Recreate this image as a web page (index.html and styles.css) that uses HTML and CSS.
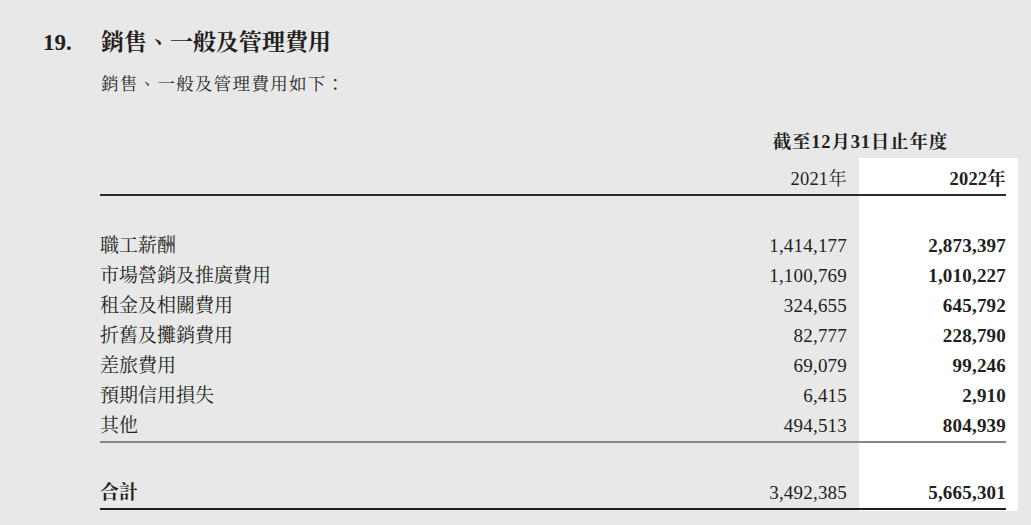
FILE: index.html
```html
<!DOCTYPE html>
<html lang="zh-Hant">
<head>
<meta charset="utf-8">
<link rel="stylesheet" href="styles.css">
</head>
<body>
<div class="page">
  <h1 class="heading"><span class="num">19.</span><span class="title">銷售、一般及管理費用</span></h1>
  <p class="intro">銷售、一般及管理費用如下：</p>
  <div class="period">截至12月31日止年度</div>
  <div class="table">
    <div class="col labels">
      <div class="cell head"></div>
      <div class="spacer"></div>
      <div class="cell">職工薪酬</div>
      <div class="cell">市場營銷及推廣費用</div>
      <div class="cell">租金及相關費用</div>
      <div class="cell">折舊及攤銷費用</div>
      <div class="cell">差旅費用</div>
      <div class="cell">預期信用損失</div>
      <div class="cell last">其他</div>
      <div class="spacer"></div>
      <div class="cell total">合計</div>
    </div>
    <div class="col y2021">
      <div class="cell head">2021年</div>
      <div class="spacer"></div>
      <div class="cell">1,414,177</div>
      <div class="cell">1,100,769</div>
      <div class="cell">324,655</div>
      <div class="cell">82,777</div>
      <div class="cell">69,079</div>
      <div class="cell">6,415</div>
      <div class="cell last">494,513</div>
      <div class="spacer"></div>
      <div class="cell total">3,492,385</div>
    </div>
    <div class="col y2022">
      <div class="cell head">2022年</div>
      <div class="spacer"></div>
      <div class="cell">2,873,397</div>
      <div class="cell">1,010,227</div>
      <div class="cell">645,792</div>
      <div class="cell">228,790</div>
      <div class="cell">99,246</div>
      <div class="cell">2,910</div>
      <div class="cell last">804,939</div>
      <div class="spacer"></div>
      <div class="cell total">5,665,301</div>
    </div>
  </div>
</div>
</body>
</html>
```
FILE: styles.css
```css
* { box-sizing: border-box; }
html, body {
  margin: 0;
  padding: 0;
  background: #e7e8e7;
}
body {
  font-family: "Liberation Serif", "Noto Serif CJK TC", "Noto Sans CJK TC", serif;
  color: #231f20;
  width: 1031px;
  height: 525px;
  overflow: hidden;
}
.page {
  padding: 28px 13px 0 43px;
}
.heading {
  display: flex;
  margin: 0;
  font-size: 23px;
  line-height: 30px;
  font-weight: bold;
  height: 30px;
}
.heading .num {
  width: 58px;
  flex: none;
}
.intro {
  margin: 13px 0 0 58px;
  font-size: 17.5px;
  line-height: 26px;
  letter-spacing: 1.3px;
  color: #2a2627;
}
.period {
  padding-top: 32px;
  height: 61px;
  line-height: 26px;
  font-size: 18.5px;
  font-weight: bold;
  letter-spacing: 0.8px;
  text-align: right;
  padding-right: 70px;
}
.table {
  display: flex;
  margin-left: 57px;
}
.col {
  display: flex;
  flex-direction: column;
}
.labels {
  flex: 1;
}
.y2021 {
  width: 159px;
  text-align: right;
}
.y2021 .cell {
  padding-right: 12px;
}
.y2022 {
  width: 159px;
  padding-right: 12px;
  padding-bottom: 1px;
  background: #ffffff;
  text-align: right;
  font-weight: bold;
}
.cell {
  height: 30px;
  line-height: 30px;
  font-size: 19px;
  white-space: nowrap;
}
.y2021 .cell, .y2022 .cell {
  letter-spacing: 0.2px;
}
.cell.head {
  height: 38px;
  padding-top: 6px;
  border-bottom: 2px solid #2b2b2b;
  font-size: 18.5px;
}
.spacer {
  height: 35px;
}
.cell.last {
  height: 32px;
  border-bottom: 2px solid #858585;
}
.cell.total {
  height: 32px;
  border-bottom: 2px solid #1f1f1f;
}
.labels .cell.total {
  font-weight: bold;
}
```
